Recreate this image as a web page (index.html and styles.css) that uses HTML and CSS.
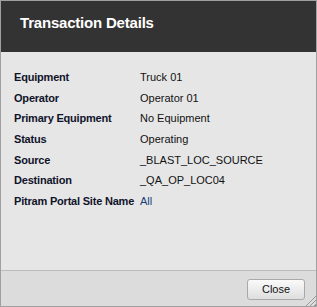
FILE: index.html
```html
<!DOCTYPE html>
<html lang="en">
<head>
    <meta charset="UTF-8">
    <title>Transaction Details</title>
    <link rel="stylesheet" href="styles.css">
</head>
<body>
    <div class="dialog">
        <div class="dialog-header">
            <p>Transaction Details</p>
        </div>
        <div class="dialog-body">
            <div class="detail-row">
                <span class="detail-label">Equipment</span>
                <span class="detail-value">Truck 01</span>
            </div>
            <div class="detail-row">
                <span class="detail-label">Operator</span>
                <span class="detail-value">Operator 01</span>
            </div>
            <div class="detail-row">
                <span class="detail-label">Primary Equipment</span>
                <span class="detail-value">No Equipment</span>
            </div>
            <div class="detail-row">
                <span class="detail-label">Status</span>
                <span class="detail-value">Operating</span>
            </div>
            <div class="detail-row">
                <span class="detail-label">Source</span>
                <span class="detail-value">_BLAST_LOC_SOURCE</span>
            </div>
            <div class="detail-row">
                <span class="detail-label">Destination</span>
                <span class="detail-value">_QA_OP_LOC04</span>
            </div>
            <div class="detail-row">
                <span class="detail-label">Pitram Portal Site Name</span>
                <span class="detail-value site">All</span>
            </div>
        </div>
        <div class="dialog-footer">
            <button class="close-btn">Close</button>
            <div class="grip"></div>
        </div>
    </div>
</body>
</html>
```

FILE: styles.css
```css
* {
    box-sizing: border-box;
}

body {
    margin: 0;
    font-family: 'Liberation Sans', Arial, sans-serif;
    font-size: 11px;
    color: #111;
}

.dialog {
    width: 317px;
    height: 307px;
    border: 1px solid #a0a0a0;
    background: #e6e6e6;
    display: flex;
    flex-direction: column;
}

.dialog-header {
    height: 51px;
    background: #333333;
    padding: 13px 0 0 19px;
}

.dialog-header p {
    margin: 0;
    color: #fff;
    font-family: 'Liberation Sans', Arial, sans-serif;
    font-weight: bold;
    font-size: 15px;
    letter-spacing: -0.2px;
}

.dialog-body {
    flex: 1;
    padding: 15px 0 0 13px;
}

.detail-row {
    display: flex;
    height: 20.6px;
    align-items: center;
}

.detail-label {
    width: 126px;
    font-weight: bold;
    color: #10132a;
    letter-spacing: -0.2px;
}

.detail-value {
    color: #111;
}

.detail-value.site {
    color: #1c3f7a;
}

.dialog-footer {
    height: 36px;
    background: #dcdcdc;
    border-top: 1px solid #bcbcbc;
    display: flex;
    justify-content: flex-end;
    align-items: center;
    padding-right: 11px;
    position: relative;
}

.close-btn {
    width: 58px;
    height: 21px;
    border: 1px solid #a9a9a9;
    border-radius: 3px;
    background: linear-gradient(#fafafa, #ececec 50%, #dedede);
    font-family: 'Liberation Sans', Arial, sans-serif;
    font-size: 11px;
    color: #111;
    padding: 0;
    margin-top: 1px;
}

.grip {
    position: absolute;
    right: 0;
    bottom: 0;
    width: 11px;
    height: 11px;
    background: repeating-linear-gradient(135deg, transparent 0 2px, #9a9a9a 2px 3px);
    clip-path: polygon(100% 0, 100% 100%, 0 100%);
}
```
